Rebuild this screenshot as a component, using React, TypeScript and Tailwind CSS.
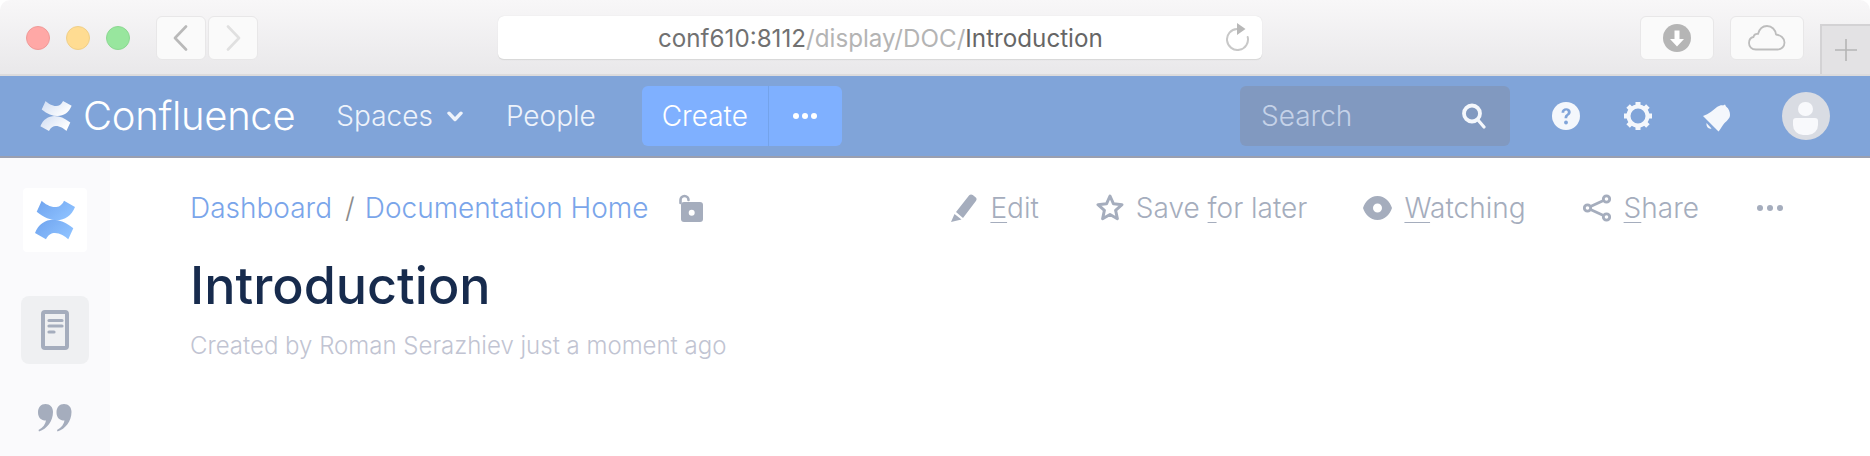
import React from "react";

const Logo = ({ a, b, id }: { a: string; b: string; id: string }) => (
  <svg viewBox="0 0 64 64" className="w-full h-full">
    <defs>
      <linearGradient id={id} x1="0" y1="0" x2="1" y2="0.6">
        <stop offset="0" stopColor={a} />
        <stop offset="1" stopColor={b} />
      </linearGradient>
    </defs>
    <path d="M18.700 12.700C24 18 36 24 41 12.700L52 19C46 34 30 37 13.700 23.700Z" fill={`url(#${id})`} />
    <path d="M45.300 51.300C40 46 28 40 23 51.300L12 45C18 30 34 27 50.300 40.300Z" fill={`url(#${id})`} />
  </svg>
);

const Action = ({ icon, gap, children }: { icon: React.ReactNode; gap: string; children: React.ReactNode }) => (
  <div className={`flex items-center ${gap}`}>
    {icon}
    <span className="text-[28px] leading-[32px] font-light text-[#a5adbd] whitespace-nowrap">{children}</span>
  </div>
);

const U = ({ children }: { children: React.ReactNode }) => (
  <span className="underline decoration-1 underline-offset-[4px]">{children}</span>
);

export default function App() {
  return (
    <div className="w-[1870px] h-[456px] overflow-hidden bg-white flex flex-col font-['Inter',sans-serif]">
      {/* Browser chrome */}
      <div className="h-[76px] shrink-0 rounded-t-[10px] bg-gradient-to-b from-[#f8f7f8] to-[#e9e8ea] border-b-2 border-[#dcdbdc] flex">
        <div className="flex items-center gap-[16px] ml-[26px] h-[76px] shrink-0">
          <div className="w-[24px] h-[24px] rounded-full bg-[#ffa8a6] border border-[#f09a98]" />
          <div className="w-[24px] h-[24px] rounded-full bg-[#ffdc92] border border-[#f0cf88]" />
          <div className="w-[24px] h-[24px] rounded-full bg-[#98e69e] border border-[#8cd892]" />
        </div>
        <div className="flex gap-[2px] ml-[26px] mt-[16px] h-[44px] shrink-0">
          <div className="w-[50px] h-[44px] rounded-[6px] bg-[#fafafa] border border-[#e8e7e8] flex items-center justify-center">
            <svg width="18" height="26" viewBox="0 0 18 26" fill="none" stroke="#b9b9b9" strokeWidth="2.600" strokeLinecap="round" strokeLinejoin="round"><path d="M14 1.500 3 13l11 11.500" /></svg>
          </div>
          <div className="w-[50px] h-[44px] rounded-[6px] bg-[#fafafa] border border-[#e8e7e8] flex items-center justify-center">
            <svg width="18" height="26" viewBox="0 0 18 26" fill="none" stroke="#e0e0e0" strokeWidth="2.600" strokeLinecap="round" strokeLinejoin="round"><path d="M4 1.500 15 13 4 24.500" /></svg>
          </div>
        </div>
        <div className="w-[764px] h-[44px] ml-[240px] mt-[16px] shrink-0 rounded-[6px] bg-white border-b border-[#d9d9d9] shadow-[0_0_1px_rgba(0,0,0,0.15)] flex items-center relative">
          <div className="ml-[160px] mt-[3px] text-[24.200px] leading-[30px] text-[#717171] whitespace-nowrap">
            conf610:8112<span className="text-[#b4b4b4]">/display/DOC/</span><span className="text-[#666]">Introduction</span>
          </div>
          <svg className="absolute left-[728px] top-[7px]" width="24" height="28" viewBox="0 0 24 28" fill="none">
            <path d="M11 6A10.500 10.500 0 1 0 21.700 14" stroke="#c8c8c8" strokeWidth="2" strokeLinecap="round" />
            <path d="M11 0v12l8.500-6z" fill="#b8b8b8" />
          </svg>
        </div>
        <div className="w-[74px] h-[44px] ml-[378px] mt-[16px] shrink-0 rounded-[6px] bg-[#fafafa] border border-[#e8e7e8] flex items-center justify-center">
          <svg width="28" height="28" viewBox="0 0 28 28">
            <circle cx="14" cy="14" r="14" fill="#b5b5b5" />
            <path d="M11.500 6.500h5v8.500h4.500L14 22.500 7 15h4.500z" fill="#fff" />
          </svg>
        </div>
        <div className="w-[74px] h-[44px] ml-[16px] mt-[16px] shrink-0 rounded-[6px] bg-[#fafafa] border border-[#e8e7e8] flex items-center justify-center">
          <svg width="38" height="26" viewBox="0 0 38 26" fill="none" stroke="#bdbdbd" strokeWidth="1.800" strokeLinejoin="round">
            <path d="M8 24.500C3.500 24.500 1 21.500 1 18c0-3.200 2-5.500 4.500-6 .5-2.500 2.500-3.500 4.500-3C11.500 3.500 15 1 19 1c5 0 8.500 3.800 9 8.500 4.500.5 8.500 3.500 8.500 8 0 4-3 7-7 7z" />
          </svg>
        </div>
        <div className="w-[50px] h-[50px] ml-[16px] mt-[24px] shrink-0 bg-[#e3e2e4] border-l-2 border-t-2 border-[#d3d2d4] flex items-center justify-center">
          <svg width="24" height="24" viewBox="0 0 24 24" stroke="#b5b5b5" strokeWidth="1.600"><path d="M12 1v22M1 12h22" /></svg>
        </div>
      </div>

      {/* App nav */}
      <div className="h-[82px] shrink-0 bg-[#80a4d9] border-b-2 border-[#9a9fb0] flex items-center pl-[31px]">
        <div className="w-[50px] h-[50px] shrink-0">
          <Logo a="#cfdcf2" b="#ffffff" id="navlogo" />
        </div>
        <span className="ml-[2px] text-[40px] leading-[48px] font-light text-white tracking-[-0.3px] whitespace-nowrap">Confluence</span>
        <span className="ml-[41px] text-[28px] leading-[32px] font-light text-[#eef3fb]">Spaces</span>
        <svg className="ml-[14px] mt-[1px] shrink-0" width="16" height="11" viewBox="0 0 16 11" fill="none" stroke="#eef3fb" strokeWidth="3.400" strokeLinecap="round" strokeLinejoin="round"><path d="M2 2.200 8 8.500l6-6.300" /></svg>
        <span className="ml-[43px] text-[28px] leading-[32px] font-light text-[#eef3fb]">People</span>
        <div className="ml-[46px] h-[60px] w-[200px] shrink-0 rounded-[6px] bg-[#7fb0ff] flex items-stretch">
          <div className="w-[127px] border-r border-[#74a3ea] flex items-center justify-center text-[28px] leading-[32px] font-light text-white">Create</div>
          <div className="flex-1 flex items-center justify-center gap-[3px]">
            <span className="w-[6px] h-[6px] rounded-full bg-white" />
            <span className="w-[6px] h-[6px] rounded-full bg-white" />
            <span className="w-[6px] h-[6px] rounded-full bg-white" />
          </div>
        </div>
        <div className="ml-auto h-[60px] w-[270px] shrink-0 rounded-[6px] bg-[#8199c0] flex items-center pl-[21px] pr-[24px] justify-between">
          <span className="text-[28px] leading-[32px] font-light text-[#c5d2e8]">Search</span>
          <svg width="24" height="26" viewBox="0 0 24 26" fill="none" stroke="#f4f7fc" strokeLinecap="round"><circle cx="10" cy="10.500" r="8" strokeWidth="3.800" /><path d="m16 17 6 7" strokeWidth="3.200" /></svg>
        </div>
        <svg className="ml-[42px] shrink-0" width="28" height="28" viewBox="0 0 28 28">
          <circle cx="14" cy="14" r="14" fill="#f4f7fc" />
          <path d="M9.500 10.800c0-3 2-4.600 4.700-4.600 2.600 0 4.500 1.500 4.500 3.900 0 3.400-3.500 3.300-3.500 6.100h-2.700c0-4.100 3.300-4 3.300-6 0-1-.7-1.600-1.700-1.600-1.100 0-1.800.8-1.800 2.200z" fill="#80a4d9" />
          <circle cx="14" cy="20.500" r="1.900" fill="#80a4d9" />
        </svg>
        <svg className="ml-[44px] shrink-0" width="28" height="28" viewBox="0 0 28 28" fill="none">
          <circle cx="14" cy="14" r="9.500" stroke="#f4f7fc" strokeWidth="4" />
          <g stroke="#f4f7fc" strokeWidth="5">
            <path d="M14 0v5M14 23v5M0 14h5M23 14h5M4.100 4.100l3.500 3.500M20.400 20.400l3.500 3.500M23.900 4.100l-3.500 3.500M7.600 20.400l-3.500 3.500" />
          </g>
        </svg>
        <svg className="ml-[51px] mt-[4px] shrink-0" width="27" height="28" viewBox="0 0 27 28" fill="#f4f7fc">
          <path d="M0 12C6 10 10 6 14 3C17 1 19 1 20 1.500L22 .5L23 2.500C26 4.500 27 8 27 11C27 15 23 17 20 21C18 24 17 26 15.500 27.500Z" />
          <path d="M3.500 19 8.500 24.500C6 25.500 3 23 3.500 19Z" />
        </svg>
        <div className="ml-[52px] mr-[40px] w-[48px] h-[48px] shrink-0 rounded-full bg-[#d9dce3] relative overflow-hidden">
          <div className="absolute left-[16px] top-[10px] w-[15px] h-[14px] rounded-full bg-[#f8f9fc]" />
          <div className="absolute left-[11px] top-[26px] w-[25px] h-[17px] rounded-t-[3px] rounded-b-[10px] bg-[#f8f9fc]" />
        </div>
      </div>

      {/* Body */}
      <div className="flex-1 flex min-h-0">
        <div className="w-[110px] shrink-0 bg-[#fafafc] flex flex-col items-center pt-[30px]">
          <div className="w-[64px] h-[64px] rounded-[4px] bg-white shrink-0">
            <Logo a="#6fa3ee" b="#8dc1ff" id="sidelogo" />
          </div>
          <div className="w-[68px] h-[68px] mt-[44px] shrink-0 rounded-[8px] bg-[#eff0f2] flex items-center justify-center">
            <svg width="28" height="40" viewBox="0 0 28 40" fill="none">
              <rect x="2" y="2" width="24" height="36" rx="2" stroke="#a5adbd" strokeWidth="4" />
              <g stroke="#a5adbd" strokeWidth="3.200" strokeLinecap="round">
                <path d="M8 10.500h13M8 16h13M8 22h5" />
              </g>
            </svg>
          </div>
          <svg className="mt-[40px] shrink-0" width="34" height="28" viewBox="0 0 34 28" fill="#a5adbd">
            <path d="M7.500 0C12 0 15 3 15 8c0 9-6 17-14 19.500l-.5-1.500c4.500-2.500 7-6 7.500-9.500C3 16.500 0 13.500 0 8.200 0 3.500 3 0 7.500 0z" />
            <path d="M26 0c4.500 0 7.500 3 7.500 8 0 9-6 17-14 19.500l-.5-1.500c4.500-2.500 7-6 7.500-9.500-5 0-8-3-8-8.300C18.500 3.500 21.500 0 26 0z" />
          </svg>
        </div>
        <div className="flex-1 pl-[80px] pt-[32px] min-w-0">
          <div className="flex items-center h-[36px]">
            <span className="text-[28px] leading-[32px] font-light text-[#7aa5ea] whitespace-nowrap">Dashboard</span>
            <span className="ml-[13px] text-[28px] leading-[32px] font-light text-[#8b8b8b]">/</span>
            <span className="ml-[10px] text-[28px] leading-[32px] font-light text-[#7aa5ea] whitespace-nowrap">Documentation Home</span>
            <svg className="ml-[30px] shrink-0" width="24" height="28" viewBox="0 0 24 28" fill="none">
              <path d="M1.500 9V6a4 4 0 0 1 8 0" stroke="#a5adbd" strokeWidth="2.600" strokeLinecap="round" />
              <rect x="2" y="8" width="22" height="20" rx="3" fill="#a5adbd" />
              <circle cx="12.700" cy="18.700" r="3" fill="#fff" />
            </svg>
            <div className="ml-auto mr-[87px] flex items-center">
              <Action gap="gap-[13px]" icon={
                <svg className="shrink-0" width="26" height="28" viewBox="0 0 26 28" fill="#a5adbd"><path d="M5 18 18 1.500c1-1.200 2.500-1.500 3.800-.5l2.700 2.200c1.300 1 1.400 2.600.4 3.800L12 24zM3.500 20l7 5.500L0 28z" /></svg>
              }><U>E</U>dit</Action>
              <div className="ml-[57px]"><Action gap="gap-[12px]" icon={
                <svg className="shrink-0" width="28" height="28" viewBox="0 0 28 28" fill="none" stroke="#a5adbd" strokeWidth="3" strokeLinejoin="round"><path d="m14 2 3.500 7.800 8.500.9-6.400 5.600 1.800 8.400L14 20.500l-7.400 4.200 1.800-8.400L2 10.700l8.500-.9z" /></svg>
              }>Save <U>f</U>or later</Action></div>
              <div className="ml-[56px]"><Action gap="gap-[12px]" icon={
                <svg className="shrink-0" width="29" height="24" viewBox="0 0 29 24" fill="#a5adbd"><path fillRule="evenodd" d="M14.500 0C22 0 27 6 29 12c-2 6-7 12-14.500 12S2 18 0 12C2 6 7 0 14.500 0zm0 7.500a4.500 4.500 0 1 0 0 9 4.500 4.500 0 0 0 0-9z" /></svg>
              }><U>W</U>atching</Action></div>
              <div className="ml-[57px]"><Action gap="gap-[13px]" icon={
                <svg className="shrink-0" width="28" height="28" viewBox="0 0 28 28" fill="none" stroke="#a5adbd" strokeWidth="2.800"><circle cx="23.500" cy="5" r="3.200" /><circle cx="4.500" cy="14" r="3.200" /><circle cx="23.500" cy="23" r="3.200" /><path d="M7.500 12.500 20.500 6.500M7.500 15.500l13 6" /></svg>
              }><U>S</U>hare</Action></div>
              <div className="ml-[58px] flex gap-[4px]">
                <span className="w-[6px] h-[6px] rounded-full bg-[#a5adbd]" />
                <span className="w-[6px] h-[6px] rounded-full bg-[#a5adbd]" />
                <span className="w-[6px] h-[6px] rounded-full bg-[#a5adbd]" />
              </div>
            </div>
          </div>
          <h1 className="mt-[28px] text-[52px] leading-[64px] font-medium text-[#172b4d]">Introduction</h1>
          <p className="mt-[13px] text-[24px] leading-[30px] font-light text-[#c1c4d2]">Created by Roman Serazhiev just a moment ago</p>
        </div>
      </div>
    </div>
  );
}
